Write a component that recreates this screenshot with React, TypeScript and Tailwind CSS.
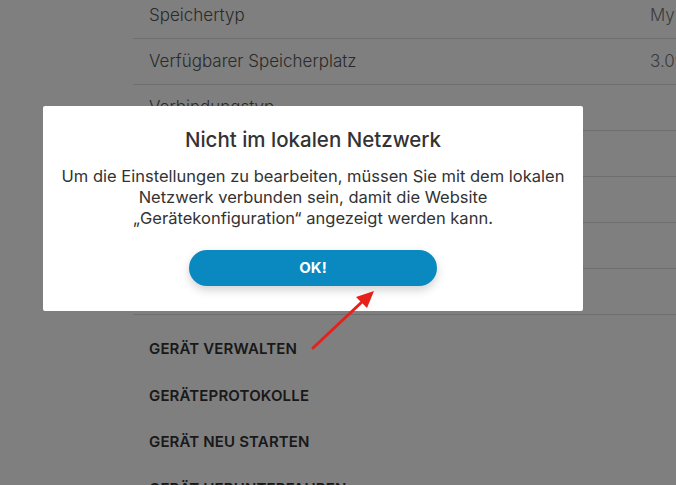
import React from 'react';

const rows = [
    { label: 'Speichertyp', value: 'My Cloud' },
    { label: 'Verfügbarer Speicherplatz', value: '3.09 TB' },
    { label: 'Verbindungstyp', value: '' },
    { label: 'Netzwerk', value: '' },
    { label: 'IP-Adresse', value: '' },
    { label: 'MAC-Adresse', value: '' },
    { label: 'Firmware', value: '' },
];

const actions = ['GERÄT VERWALTEN', 'GERÄTEPROTOKOLLE', 'GERÄT NEU STARTEN', 'GERÄT HERUNTERFAHREN'];

const App = () => {
    return (
        <div className="relative w-[676px] h-[485px] overflow-hidden bg-white" style={{ fontFamily: 'Inter, "Noto Sans", sans-serif' }}>
            {/* page behind the dialog */}
            <div className="ml-[133px] -mt-[7px]">
                {rows.map((row, i) => (
                    <div key={i} className="flex items-center h-[46px] border-b border-[#dcdcdc] pl-4">
                        <div className="w-[501px] shrink-0 text-[17px] font-light text-[#555] whitespace-nowrap">{row.label}</div>
                        <div className="text-[17px] font-light text-[#777] whitespace-nowrap">{row.value}</div>
                    </div>
                ))}
                <div className="pt-[11px]">
                    {actions.map((a) => (
                        <div key={a} className="flex items-center h-[46.5px] pl-4 text-[15px] font-semibold text-[#333] tracking-[0.01em]">
                            {a}
                        </div>
                    ))}
                </div>
            </div>

            {/* overlay */}
            <div className="absolute inset-0 bg-black/50" />

            {/* dialog */}
            <div className="absolute left-[43px] top-[106px] w-[540px] h-[205px] bg-white rounded-[2px] flex flex-col items-center pt-[22px] text-[#333]">
                <h2 className="text-[20.5px] font-medium leading-[24px] whitespace-nowrap">Nicht im lokalen Netzwerk</h2>
                <p className="mt-[14px] text-[16.5px] leading-[21px] text-center whitespace-nowrap">
                    Um die Einstellungen zu bearbeiten, müssen Sie mit dem lokalen
                    <br />
                    Netzwerk verbunden sein, damit die Website
                    <br />
                    „Gerätekonfiguration“ angezeigt werden kann.
                </p>
                <button className="mt-[21px] w-[248px] h-[36px] rounded-full bg-[#0a88c0] text-white text-[15px] font-bold shadow-[0_4px_10px_rgba(0,0,0,0.18)]">
                    OK!
                </button>
            </div>

            {/* red annotation arrow */}
            <svg className="absolute left-0 top-0" width="676" height="485" viewBox="0 0 676 485">
                <line x1="313" y1="348" x2="364" y2="300" stroke="#e8201c" strokeWidth="3" strokeLinecap="round" />
                <polygon points="374,291 356,297 367,308" fill="#e8201c" />
            </svg>
        </div>
    );
};

export default App;
